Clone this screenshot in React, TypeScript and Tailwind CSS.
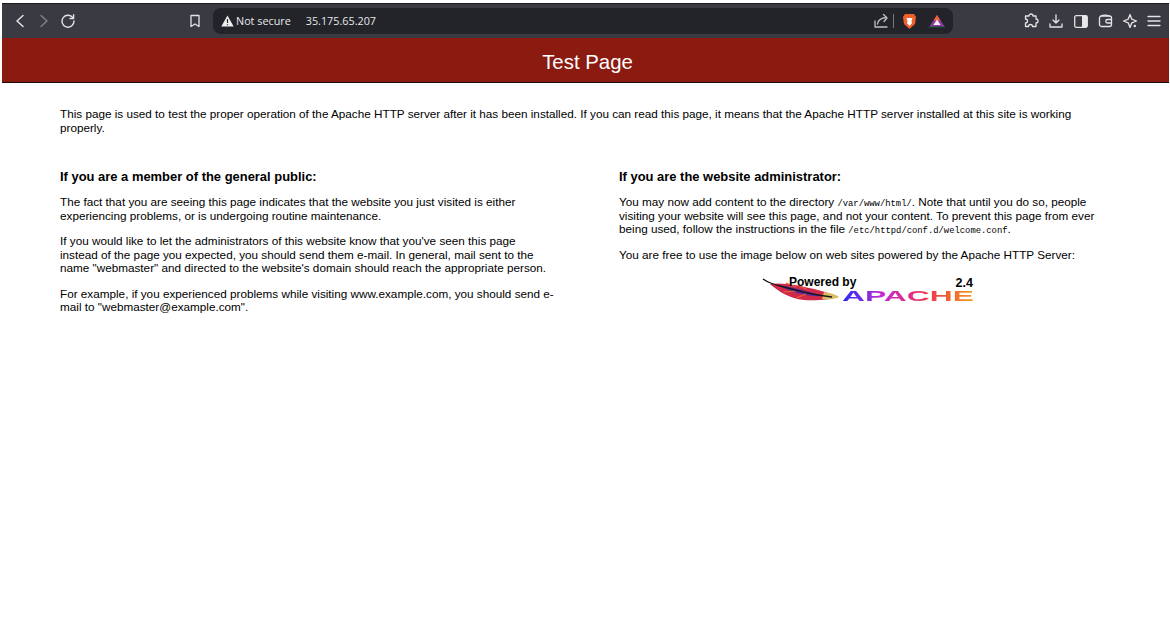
import React from "react";

const I = ({ children, w = 16, h = 16, vb = "0 0 16 16", cls = "" }: { children: React.ReactNode; w?: number; h?: number; vb?: string; cls?: string }) => (
  <svg width={w} height={h} viewBox={vb} fill="none" stroke="currentColor" strokeWidth="1.3" strokeLinecap="round" strokeLinejoin="round" className={cls}>
    {children}
  </svg>
);

function Toolbar() {
  return (
    <div className="flex h-[35px] items-center border-t border-[#1c1c1e] bg-[#3a3a42] text-[#e4e4e6]">
      <div className="flex w-[211px] shrink-0 items-center">
        <I w={12} h={14} vb="0 0 12 14" cls="ml-[12px]"><path d="M9 1.500 3 7l6 5.500" strokeWidth="1.500" /></I>
        <I w={12} h={14} vb="0 0 12 14" cls="ml-[12px] text-[#85858b]"><path d="m3 1.500 6 5.500-6 5.500" /></I>
        <I w={16} h={16} cls="ml-[10px]"><path d="M13.200 5.200A6 6 0 1 0 14 8" strokeWidth="1.400" /><path d="M13.600 1.800v3.700H10" strokeWidth="1.400" /></I>
        <I w={12} h={14} vb="0 0 12 14" cls="ml-[113px]"><path d="M2 1.500h8v11L6 10l-4 2.500z" /></I>
      </div>
      <div className="flex h-[26px] w-[740px] items-center rounded-lg bg-[#23232a] font-['Open_Sans',sans-serif] text-[10.800px] text-[#e8e8ea]">
        <svg width="13" height="12" viewBox="0 0 13 12" className="ml-[8px]"><path d="M6.500.500 12.700 11.500H.300z" fill="#eeeeee" /><path d="M6.500 4v4M6.500 9.200v1" stroke="#23232a" strokeWidth="1.200" /></svg>
        <span className="ml-[2px]">Not secure</span>
        <span className="ml-[15px]">35.175.65.207</span>
        <div className="ml-auto flex items-center">
          <I w={16} h={16} cls="text-[#c0c0c4]"><path d="M2 8v6h12" /><path d="M4.500 11c.5-4 3-6 9-6.500" /><path d="M10.500 1.500l3.500 3.500-3 3.500" /></I>
          <div className="ml-[4px] h-[14px] w-px bg-[#77777c]" />
          <svg width="15" height="17" viewBox="0 0 15 17" className="ml-[8px]"><path d="M3 1h9l2 3-1 7-5.500 5L2 11 1 4z" fill="#f0602a" /><path d="M4.500 5h6L9.500 8l.5 2-2.500 3L5 10l.5-2z" fill="#fff" /></svg>
          <svg width="18" height="15" viewBox="0 0 18 15" className="ml-[11px] mr-[7px]"><path d="M9 1 17.500 14H.5z" fill="#8a3ea0" /><path d="M9 1 12.500 6.500H5.500z" fill="#f0603a" /><path d="M9 5.500 12.500 11h-7z" fill="#f4eef6" /><path d="M.5 14h17l-1-1.500H1.500z" fill="#16402e" /></svg>
        </div>
      </div>
      <div className="flex flex-1 items-center">
        <I w={16} h={16} cls="ml-[70px]"><path d="M6 3a2 2 0 0 1 4 0h3v3a2 2 0 0 1 0 4v3.500H9.500a2 2 0 0 0-4 0H2.500V10a2 2 0 0 0 0-4V3z" /></I>
        <I w={16} h={16} cls="ml-[9px]"><path d="M8 2v8M5 7l3 3 3-3M2 11v3h12v-3" /></I>
        <svg width="14" height="13" viewBox="0 0 14 13" className="ml-[10px]"><rect x=".7" y=".7" width="12.600" height="11.600" rx="1.500" fill="none" stroke="#e4e4e6" strokeWidth="1.300" /><rect x="8" y="1" width="5" height="11" fill="#e8e8e8" /></svg>
        <I w={15} h={14} vb="0 0 15 14" cls="ml-[10px]"><rect x="1.500" y="2" width="12" height="10.500" rx="2" /><path d="M3 2c2-1 6-1 8 0M13.500 5.500H9.500a1.500 1.500 0 0 0 0 3.500h4" /></I>
        <I w={16} h={16} cls="ml-[9px]"><path d="M8 1.500 9.800 6.200 14.500 8l-4.700 1.800L8 14.500 6.200 9.800 1.500 8l4.700-1.800z" /><circle cx="12.800" cy="13" r="1.200" fill="currentColor" stroke="none" /></I>
        <I w={14} h={12} vb="0 0 14 12" cls="ml-[9px]"><path d="M1 1.500h12M1 6h12M1 10.500h12" /></I>
      </div>
    </div>
  );
}

function Feather() {
  return (
    <svg width="80" height="26" viewBox="0 0 80 26">
      <path d="M8 7C22 5 40 9 56 13 66 16 74 18 76 20 70 22 56 24 42 23 28 22 16 14 8 7Z" fill="#d02a48" />
      <path d="M16 8C30 10 46 14 60 19 48 20 30 16 16 8Z" fill="#5a2a9a" />
      <path d="M24 6 34 10M36 8 44 12M22 15 34 14M34 21 44 17" stroke="#e8603a" strokeWidth="1.200" />
      <path d="M62 15C68 16 75 18 77 20 73 22 66 23 60 22Z" fill="#d8bc60" />
      <path d="M1 2C8 7 14 8 22 10 36 14 52 18 70 20" stroke="#16161f" strokeWidth="1.500" fill="none" />
    </svg>
  );
}

function Logo() {
  return (
    <div className="relative ml-[143px] mt-[16px] h-[34px] w-[212px]">
      <div className="absolute left-0 top-0"><Feather /></div>
      <span className="absolute left-[27px] top-[-2px] text-[12px] font-bold leading-[14px] text-black">Powered by</span>
      <span className="absolute right-[1px] top-[-1px] text-[12.500px] font-bold leading-[14px] text-black">2.4</span>
      <span className="absolute left-[80px] top-[12px] inline-block origin-left scale-x-[2.270] bg-[linear-gradient(90deg,#2a2af5_0%,#6a2ae8_14%,#c42ad0_30%,#e02a90_48%,#ee3a50_66%,#f06030_80%,#f49a20_100%)] bg-clip-text text-[14px] font-bold leading-[14px] text-transparent">APACHE</span>
    </div>
  );
}

export default function App() {
  const mono = "font-['Liberation_Mono',monospace] text-[8.850px] leading-[0]";
  return (
    <div className="min-h-[633px] bg-white pl-[2px] pr-[1px] pt-[3px] font-['Liberation_Sans',sans-serif] text-[11.720px] leading-[13.500px] text-black">
      <Toolbar />
      <div className="flex h-[45px] items-center justify-center border-b border-[#1c0a08] bg-[#8b1a10] pl-[4px] pt-[6px] text-[20.400px] text-white">Test Page</div>
      <p className="mb-[35px] ml-[58px] mr-[95px] mt-[24px]">
        This page is used to test the proper operation of the Apache HTTP server after it has been installed. If you can read this page, it means that the Apache HTTP server installed at this site is working properly.
      </p>
      <div className="ml-[58px] grid grid-cols-[496px_480px] gap-x-[63px]">
        <div>
          <h2 className="mb-[10px] text-[12.950px] font-bold leading-[16px]">If you are a member of the general public:</h2>
          <p className="mb-[12px]">The fact that you are seeing this page indicates that the website you just visited is either experiencing problems, or is undergoing routine maintenance.</p>
          <p className="mb-[12px]">If you would like to let the administrators of this website know that you've seen this page instead of the page you expected, you should send them e-mail. In general, mail sent to the name "webmaster" and directed to the website's domain should reach the appropriate person.</p>
          <p>For example, if you experienced problems while visiting www.example.com, you should send e-mail to "webmaster@example.com".</p>
        </div>
        <div>
          <h2 className="mb-[10px] text-[12.950px] font-bold leading-[16px]">If you are the website administrator:</h2>
          <p className="mb-[12px]">You may now add content to the directory <code className={mono}>/var/www/html/</code>. Note that until you do so, people visiting your website will see this page, and not your content. To prevent this page from ever being used, follow the instructions in the file <code className={mono}>/etc/httpd/conf.d/welcome.conf</code>.</p>
          <p>You are free to use the image below on web sites powered by the Apache HTTP Server:</p>
          <Logo />
        </div>
      </div>
    </div>
  );
}
